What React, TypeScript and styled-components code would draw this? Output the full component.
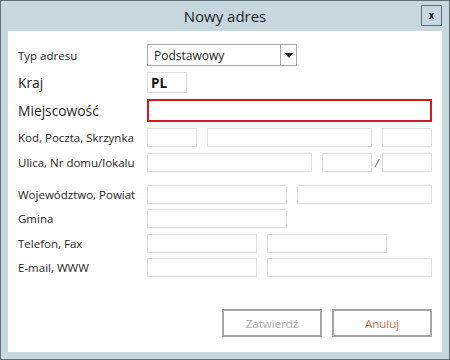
import React from "react";
import styled, { createGlobalStyle } from "styled-components";

const Global = createGlobalStyle`
  html, body { margin: 0; padding: 0; background: #ffffff; }
  * { box-sizing: border-box; }
`;

const Window = styled.div`
  width: 450px;
  height: 360px;
  background: #c6d8de;
  border: 1px solid #5f6f76;
  display: flex;
  flex-direction: column;
  font-family: "Open Sans", "Noto Sans", sans-serif;
  color: #1e1e1e;
`;

const TitleBar = styled.div`
  height: 30px;
  position: relative;
  display: flex;
  align-items: center;
  justify-content: center;
`;

const Title = styled.div`
  font-size: 15px;
  color: #222;
  margin-top: 0;
`;

const CloseButton = styled.div`
  position: absolute;
  right: 7px;
  top: 4px;
  width: 21px;
  height: 21px;
  border: 1px solid #5f6f76;
  display: flex;
  align-items: center;
  justify-content: center;
  font-family: "DejaVu Sans Mono", monospace;
  font-weight: bold;
  font-size: 10px;
  color: #111;
`;

const Body = styled.div`
  margin: 0 7px 7px 7px;
  flex: 1;
  background: #ffffff;
  padding: 13px 10px 0 10px;
  display: flex;
  flex-direction: column;
`;

const Row = styled.div<{ $top: number; $h: number }>`
  display: flex;
  align-items: center;
  margin-top: ${(p) => p.$top}px;
  height: ${(p) => p.$h}px;
`;

const Label = styled.div<{ $big?: boolean }>`
  width: 129px;
  flex: none;
  font-size: ${(p) => (p.$big ? "13.8px" : "11.5px")};
  color: #1e1e1e;
  white-space: nowrap;
`;

const Fields = styled.div`
  display: flex;
  align-items: center;
  gap: 10px;
  height: 100%;
`;

const Field = styled.div<{ $w: number; $red?: boolean }>`
  width: ${(p) => p.$w}px;
  height: 100%;
  border: ${(p) => (p.$red ? "2px solid #d41a1a" : "1px solid #e1e1e1")};
  background: #fff;
`;

const CodeBox = styled.div`
  width: 40px;
  height: 100%;
  border: 1px solid #e1e1e1;
  font-weight: bold;
  font-size: 13.5px;
  display: flex;
  align-items: center;
  padding-left: 3px;
  color: #111;
`;

const Select = styled.div`
  width: 150px;
  height: 100%;
  border: 1px solid #a8a8a8;
  display: flex;
  align-items: stretch;
`;

const SelectText = styled.div`
  flex: 1;
  font-size: 12px;
  display: flex;
  align-items: center;
  padding-left: 6px;
  color: #1e1e1e;
`;

const SelectArrow = styled.div`
  width: 16px;
  border-left: 1px solid #a8a8a8;
  display: flex;
  align-items: center;
  justify-content: center;
`;

const Slash = styled.span`
  width: 10px;
  margin: 0 -10px;
  text-align: center;
  font-size: 11px;
  color: #555;
  font-style: italic;
`;

const ButtonRow = styled.div`
  margin-top: 32px;
  display: flex;
  justify-content: flex-end;
  gap: 10px;
`;

const Button = styled.div<{ $tone: "disabled" | "accent" }>`
  width: 100px;
  height: 28px;
  border: 2px solid #a5a5a5;
  display: flex;
  align-items: center;
  justify-content: center;
  font-size: 11.5px;
  color: ${(p) => (p.$tone === "disabled" ? "#a8a8a8" : "#d0714f")};
`;

export default function App() {
  return (
    <>
      <Global />
      <Window>
        <TitleBar>
          <Title>Nowy adres</Title>
          <CloseButton>x</CloseButton>
        </TitleBar>
        <Body>
          <Row $top={0} $h={22}>
            <Label>Typ adresu</Label>
            <Select>
              <SelectText>Podstawowy</SelectText>
              <SelectArrow>
                <svg width="8" height="5" viewBox="0 0 8 5">
                  <path d="M0 0 H8 L4 5 Z" fill="#222" />
                </svg>
              </SelectArrow>
            </Select>
          </Row>
          <Row $top={6} $h={21}>
            <Label $big>Kraj</Label>
            <CodeBox>PL</CodeBox>
          </Row>
          <Row $top={6} $h={23}>
            <Label $big>Miejscowość</Label>
            <Field $w={285} $red />
          </Row>
          <Row $top={6} $h={19}>
            <Label>Kod, Poczta, Skrzynka</Label>
            <Fields>
              <Field $w={50} />
              <Field $w={165} />
              <Field $w={50} />
            </Fields>
          </Row>
          <Row $top={6} $h={19}>
            <Label>Ulica, Nr domu/lokalu</Label>
            <Fields>
              <Field $w={165} />
              <Field $w={50} />
              <Slash>/</Slash>
              <Field $w={50} />
            </Fields>
          </Row>
          <Row $top={13} $h={19}>
            <Label>Województwo, Powiat</Label>
            <Fields>
              <Field $w={140} />
              <Field $w={135} />
            </Fields>
          </Row>
          <Row $top={5} $h={19}>
            <Label>Gmina</Label>
            <Field $w={140} />
          </Row>
          <Row $top={6} $h={19}>
            <Label>Telefon, Fax</Label>
            <Fields>
              <Field $w={110} />
              <Field $w={120} />
            </Fields>
          </Row>
          <Row $top={5} $h={19}>
            <Label>E-mail, WWW</Label>
            <Fields>
              <Field $w={110} />
              <Field $w={165} />
            </Fields>
          </Row>
          <ButtonRow>
            <Button $tone="disabled">Zatwierdź</Button>
            <Button $tone="accent">Anuluj</Button>
          </ButtonRow>
        </Body>
      </Window>
    </>
  );
}
